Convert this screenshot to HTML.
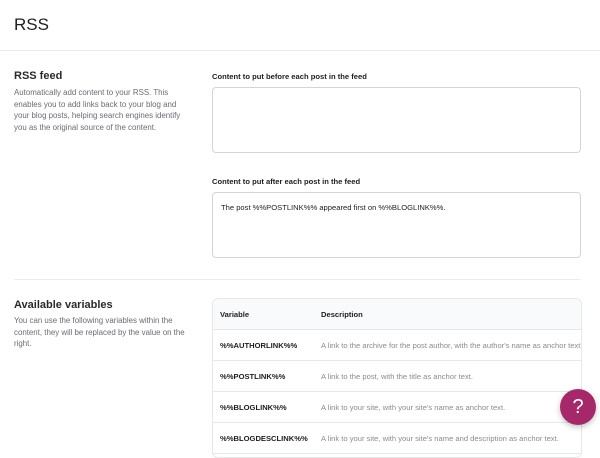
<!DOCTYPE html>
<html><head><style>
*{box-sizing:border-box;margin:0;padding:0}
body{width:600px;height:445px;overflow:hidden;background:#fff;font-family:"Liberation Sans",sans-serif;color:#1e1e1e;position:relative}
.hdr{position:absolute;left:0;top:0;width:600px;height:51px;border-bottom:1px solid #ececef}
.hdr h1{position:absolute;left:14px;top:15px;font-size:17px;font-weight:normal;color:#1e1e1e}
.h2{position:absolute;left:14px;font-size:11px;font-weight:bold;color:#2a2a2e}
.p{position:absolute;left:14px;width:178px;font-size:7.9px;line-height:11.5px;color:#6b6b75}
.lbl{position:absolute;left:212px;font-size:7.6px;font-weight:bold;color:#1e1e1e}
.ta{position:absolute;left:212px;width:369px;height:66px;border:1px solid #d1d5db;border-radius:4px;font-size:7.6px;color:#1e1e1e;padding:10px 8px}
.div{position:absolute;left:14px;top:279px;width:567px;height:1px;background:#ececef}
.tbl{position:absolute;left:212px;top:298px;width:370px;height:160px;border:1px solid #e5e7eb;border-radius:6px;overflow:hidden}
.row{height:31px;border-bottom:1px solid #e5e7eb;position:relative;font-size:7.6px;white-space:nowrap}
.row.h{background:#f9fafb;font-weight:bold;color:#1e1e1e}
.row span{position:absolute;top:11px}
.c1{left:7px;font-weight:bold;color:#1e1e1e}
.c2{left:108px;color:#8a8a93}
.row.h .c2{color:#1e1e1e}
.help{position:absolute;left:560px;top:389px;width:36px;height:36px;border-radius:50%;background:#a4286a;color:#fff;font-size:20px;text-align:center;line-height:36px;box-shadow:0 2px 6px rgba(0,0,0,.25)}
</style></head><body>
<div class="hdr"><h1>RSS</h1></div>
<div class="h2" style="top:70px">RSS feed</div>
<div class="p" style="top:87px">Automatically add content to your RSS. This enables you to add links back to your blog and your blog posts, helping search engines identify you as the original source of the content.</div>
<div class="lbl" style="top:72px">Content to put before each post in the feed</div>
<div class="ta" style="top:87px"></div>
<div class="lbl" style="top:177px">Content to put after each post in the feed</div>
<div class="ta" style="top:192px;padding-top:10px">The post %%POSTLINK%% appeared first on %%BLOGLINK%%.</div>
<div class="div"></div>
<div class="h2" style="top:299px">Available variables</div>
<div class="p" style="top:315px">You can use the following variables within the content, they will be replaced by the value on the right.</div>
<div class="tbl">
<div class="row h"><span class="c1">Variable</span><span class="c2">Description</span></div>
<div class="row"><span class="c1">%%AUTHORLINK%%</span><span class="c2">A link to the archive for the post author, with the author's name as anchor text.</span></div>
<div class="row"><span class="c1">%%POSTLINK%%</span><span class="c2">A link to the post, with the title as anchor text.</span></div>
<div class="row"><span class="c1">%%BLOGLINK%%</span><span class="c2">A link to your site, with your site's name as anchor text.</span></div>
<div class="row"><span class="c1">%%BLOGDESCLINK%%</span><span class="c2">A link to your site, with your site's name and description as anchor text.</span></div>
</div>
<div class="help">?</div>
</body></html>
